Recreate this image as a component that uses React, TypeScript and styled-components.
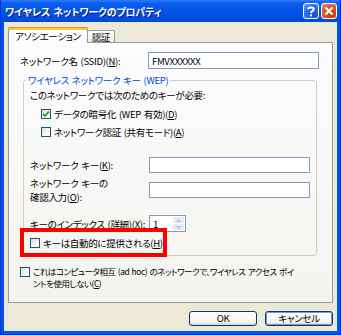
import styled, { createGlobalStyle } from 'styled-components'

/* ---------------- global ---------------- */

const Global = createGlobalStyle`
  html, body { margin: 0; padding: 0; background: #fff; }
  body {
    font-family: "MS UI Gothic", "Noto Sans CJK JP", sans-serif;
    font-size: 9.5px;
    letter-spacing: -0.3px;
    word-spacing: 1px;
    font-feature-settings: "palt";
    color: #000;
  }
  * { box-sizing: border-box; }
`

/* ---------------- window frame ---------------- */

const Window = styled.div`
  width: 341px; height: 335px;
  display: flex; flex-direction: column;
  background: #0055e5;
  border-left: 1px solid #0831d9;
  border-right: 1px solid #0831d9;
  border-bottom: 1px solid #0831d9;
`
const TitleBar = styled.div`
  height: 22px; flex: none;
  display: flex; align-items: center;
  padding: 0 3px 0 4px;
  background: linear-gradient(#2b7cf8 0%, #0a5df0 15%, #0055e5 55%, #0049d6 100%);
`
const Title = styled.div`
  flex: 1;
  color: #fff; font-weight: 700; font-size: 10px;
  letter-spacing: -0.2px;
  text-shadow: 1px 1px 0 #0a1a80;
  white-space: nowrap;
`
const CaptionBtn = styled.div<{ kind: 'help' | 'close' }>`
  width: 16px; height: 16px; margin-left: 2px;
  border: 1px solid #fff; border-radius: 3px;
  display: grid; place-items: center;
  background: ${({ kind }) => kind === 'close'
    ? 'radial-gradient(circle at 70% 80%, #c33d17, #e2592f 60%, #f08a66)'
    : 'radial-gradient(circle at 70% 80%, #1a4fd8, #2f6ef0 60%, #6a9cf8)'};
  svg { display: block; }
`
const Client = styled.div`
  flex: 1;
  margin: 0 3px 3px;
  background: #ece9d8;
  display: flex; flex-direction: column;
  padding: 5px 4px 5px 4px;
`

/* ---------------- tabs ---------------- */

const TabStrip = styled.div`
  display: flex; align-items: flex-end;
  height: 16px; flex: none;
  position: relative; z-index: 1;
`
const Tab = styled.div<{ active?: boolean }>`
  height: ${({ active }) => active ? '16px' : '13px'};
  padding: 0 ${({ active }) => active ? '6px' : '4px'};
  padding-top: ${({ active }) => active ? '1px' : '0'};
  display: flex; align-items: center;
  border: 1px solid #919b9c;
  border-bottom: ${({ active }) => active ? 'none' : '1px solid #919b9c'};
  border-left: ${({ active }) => active ? '1px solid #919b9c' : 'none'};
  border-top-color: ${({ active }) => active ? '#e68b2c' : '#919b9c'};
  border-radius: 2px 2px 0 0;
  background: ${({ active }) => active ? '#fcfcfe' : 'linear-gradient(#fff, #ecebe6)'};
  box-shadow: ${({ active }) => active ? 'inset 0 2px 0 #ffc83c' : 'none'};
  white-space: nowrap;
`
const Panel = styled.div`
  flex: 1;
  margin-top: -1px;
  border: 1px solid #919b9c;
  background: linear-gradient(#fcfcfe, #f4f3ee);
  padding: 9px 13px 0 11px;
  display: flex; flex-direction: column;
`

/* ---------------- form parts ---------------- */

const Key = styled.span`
  text-decoration: underline;
`
const FieldRow = styled.div<{ labelWidth: number; top?: number }>`
  display: grid;
  grid-template-columns: ${({ labelWidth }) => labelWidth}px 1fr;
  align-items: center;
  margin-top: ${({ top }) => top ?? 0}px;
  line-height: 12px;
`
const Label = styled.span<{ lineHeight?: number }>`
  white-space: nowrap;
  line-height: ${({ lineHeight }) => lineHeight ?? 12}px;
`
const TextBox = styled.div<{ height?: number }>`
  height: ${({ height }) => height ?? 17}px;
  border: 1px solid #7f9db9;
  background: #fff;
  padding: 0 3px;
  display: flex; align-items: center;
  white-space: nowrap; overflow: hidden;
`
const Group = styled.fieldset`
  margin: 5px 2px 0 3px;
  padding: 0 6px 6px;
  border: 1px solid #d0d0bf;
  border-radius: 3px;
  min-inline-size: 0;
  display: flex; flex-direction: column;
  line-height: 12px;
`
const Legend = styled.legend`
  color: #0046d5;
  padding: 0 2px;
  margin-left: -4px;
  line-height: 12px;
`
const Note = styled.div`
  margin-top: 3px;
  white-space: nowrap;
`
const Check = styled.label<{ indent?: number; top?: number }>`
  display: flex; align-items: center; gap: 3px;
  margin-left: ${({ indent }) => indent ?? 0}px;
  margin-top: ${({ top }) => top ?? 0}px;
  height: 13px;
  white-space: nowrap;
  position: relative;
`
const Box = styled.span`
  width: 10px; height: 10px; flex: none;
  border: 1px solid #1c5180;
  background: linear-gradient(135deg, #dcdcd7, #fff 80%);
  display: grid; place-items: center;
  svg { display: block; }
`
const Highlight = styled.span`
  position: absolute;
  left: -10px; top: -8px;
  width: 147px; height: 29px;
  border: 4px solid #f00;
  pointer-events: none;
`
const Spinner = styled.div`
  width: 37px; height: 17px;
  border: 1px solid #7f9db9;
  background: #fff;
  display: flex;
`
const SpinValue = styled.div`
  flex: 1; padding-left: 3px;
  display: flex; align-items: center;
`
const SpinBtns = styled.div`
  width: 13px;
  display: flex; flex-direction: column; gap: 1px;
  padding: 1px;
`
const SpinBtn = styled.div`
  flex: 1;
  background: #e6ebf5;
  border-radius: 1px;
  display: grid; place-items: center;
  svg { display: block; }
`
const AdHoc = styled.label`
  display: flex; align-items: flex-start; gap: 3px;
  margin-top: 9px;
  line-height: 12px;
  ${Box} { margin-top: 2px; }
`
const Lines = styled.span`
  display: flex; flex-direction: column;
  white-space: nowrap;
  font-size: 8.5px;
  letter-spacing: -0.5px;
`

/* ---------------- buttons ---------------- */

const ButtonRow = styled.div`
  display: flex; justify-content: flex-end; gap: 8px;
  margin-top: 8px;
  flex: none;
`
const Button = styled.button<{ focused?: boolean }>`
  width: 68px; height: 15px;
  font: inherit; color: #000;
  letter-spacing: inherit;
  padding: 0;
  border: 1px solid #003c74;
  border-radius: 3px;
  background: linear-gradient(#fff, #f3f3ef 80%, #d6d0c5);
  box-shadow: ${({ focused }) => focused ? 'inset 0 0 0 1px #7b9bd6' : 'none'};
  line-height: 13px;
`

export default function App() {
  return (
    <>
      <Global />
      <Window>
        <TitleBar>
          <Title>ワイヤレス ネットワークのプロパティ</Title>
          <CaptionBtn kind="help">
            <svg width="10" height="11" viewBox="0 0 10 11">
              <path d="M2.2 3.3 C2.2 1 7.8 1 7.8 3.3 C7.8 5 5 5 5 7" fill="none" stroke="#fff" strokeWidth="2" />
              <rect x="4" y="8.3" width="2" height="2" fill="#fff" />
            </svg>
          </CaptionBtn>
          <CaptionBtn kind="close">
            <svg width="10" height="10" viewBox="0 0 10 10">
              <path d="M1.5 1.5 L8.5 8.5 M8.5 1.5 L1.5 8.5" stroke="#fff" strokeWidth="2" />
            </svg>
          </CaptionBtn>
        </TitleBar>

        <Client>
          <TabStrip>
            <Tab active>アソシエーション</Tab>
            <Tab>認証</Tab>
          </TabStrip>

          <Panel>
            <FieldRow labelWidth={128}>
              <Label>ネットワーク名 (SSID)(<Key>N</Key>):</Label>
              <TextBox>FMVXXXXXX</TextBox>
            </FieldRow>

            <Group>
              <Legend>ワイヤレス ネットワーク キー (WEP)</Legend>
              <Note>このネットワークでは次のためのキーが必要:</Note>
              <Check indent={11} top={6}>
                <Box>
                  <svg width="8" height="8" viewBox="0 0 8 8">
                    <path d="M1 3.8 L3.1 6 L7 1.6" fill="none" stroke="#21a121" strokeWidth="1.8" />
                  </svg>
                </Box>
                <span>データの暗号化 (WEP 有効)(<Key>D</Key>)</span>
              </Check>
              <Check indent={11} top={5}>
                <Box />
                <span>ネットワーク認証 (共有モード)(<Key>A</Key>)</span>
              </Check>

              <FieldRow labelWidth={119} top={19}>
                <Label>ネットワーク キー(<Key>K</Key>):</Label>
                <TextBox height={16} />
              </FieldRow>
              <FieldRow labelWidth={119} top={3}>
                <Label lineHeight={14}>ネットワーク キーの<br />確認入力(<Key>O</Key>):</Label>
                <TextBox height={16} />
              </FieldRow>
              <FieldRow labelWidth={119} top={11}>
                <Label>キーのインデックス (詳細)(<Key>X</Key>):</Label>
                <Spinner>
                  <SpinValue>1</SpinValue>
                  <SpinBtns>
                    <SpinBtn>
                      <svg width="5" height="3" viewBox="0 0 5 3"><path d="M0 3 L2.5 0 L5 3Z" fill="#b4bccb" /></svg>
                    </SpinBtn>
                    <SpinBtn>
                      <svg width="5" height="3" viewBox="0 0 5 3"><path d="M0 0 L2.5 3 L5 0Z" fill="#b4bccb" /></svg>
                    </SpinBtn>
                  </SpinBtns>
                </Spinner>
              </FieldRow>
              <Check top={4}>
                <Highlight />
                <Box />
                <span>キーは自動的に提供される(<Key>H</Key>)</span>
              </Check>
            </Group>

            <AdHoc>
              <Box />
              <Lines>
                <span>これはコンピュータ相互 (ad hoc) のネットワークで、ワイヤレス アクセス ポイ</span>
                <span>ントを使用しない(<Key>C</Key>)</span>
              </Lines>
            </AdHoc>
          </Panel>

          <ButtonRow>
            <Button>OK</Button>
            <Button focused>キャンセル</Button>
          </ButtonRow>
        </Client>
      </Window>
    </>
  )
}
